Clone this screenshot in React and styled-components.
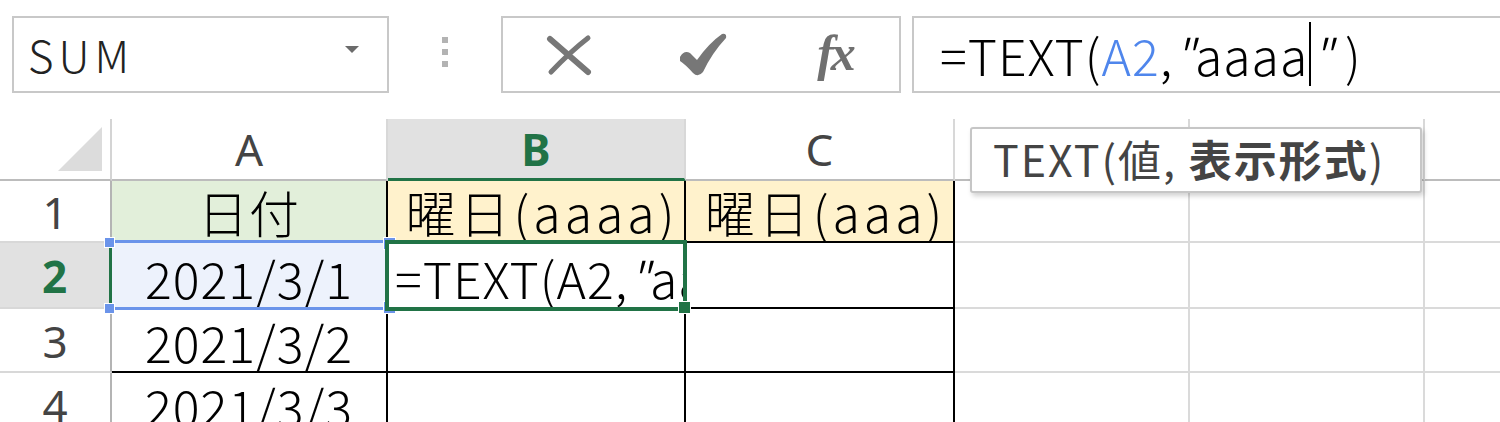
import React from 'react'
import styled, { createGlobalStyle } from 'styled-components'

const GlobalStyle = createGlobalStyle`
  html, body {
    margin: 0;
    padding: 0;
    background: #fff;
  }
  body {
    width: 1500px;
    height: 422px;
    overflow: hidden;
    font-family: "Noto Sans CJK JP", "Noto Sans", sans-serif;
  }
`

const GREEN = '#217346'
const BLUE = '#6b94ea'
const GRID = '#dadada'
const THIN = '"Noto Sans CJK JP Light", "Noto Sans CJK JP DemiLight", "Noto Sans CJK JP", "Noto Sans", sans-serif'

const Page = styled.div`
  position: relative;
  width: 1500px;
  height: 422px;
  overflow: hidden;
  background: #fff;
`

// ---- formula bar ----

const Toolbar = styled.div`
  display: flex;
  padding: 16px 0 0 12px;
  height: 77px;
`

const Box = styled.div`
  box-sizing: border-box;
  height: 77px;
  border: 2px solid #c8c8c8;
  background: #fff;
  flex-shrink: 0;
`

const NameBox = styled(Box)`
  width: 377px;
  display: flex;
  align-items: center;
  justify-content: space-between;
  padding: 0 28px 2px 14px;
  font-family: ${THIN};
  font-size: 44px;
  font-weight: 300;
  color: #222;
  letter-spacing: 5px;
`

const Caret = styled.span`
  width: 0;
  height: 0;
  border-left: 7px solid transparent;
  border-right: 7px solid transparent;
  border-top: 7px solid #6b6b6b;
  margin-bottom: 8px;
`

const Grip = styled.div`
  width: 112px;
  flex-shrink: 0;
  display: flex;
  flex-direction: column;
  align-items: center;
  justify-content: center;
  gap: 6px;
  padding-bottom: 6px;
`

const Dot = styled.span`
  width: 6px;
  height: 6px;
  background: #b3b3b3;
`

const Buttons = styled(Box)`
  width: 400px;
  display: grid;
  grid-template-columns: 132px 136px 128px;
  align-items: center;
  justify-items: center;
`

const Fx = styled.span`
  font-family: "Liberation Serif", "DejaVu Serif", serif;
  font-style: italic;
  font-weight: 700;
  font-size: 50px;
  color: #707070;
  letter-spacing: -3px;
  margin-bottom: 4px;
`

const FormulaInput = styled(Box)`
  width: 620px;
  margin-left: 11px;
  border-right: none;
  display: flex;
  align-items: center;
  padding: 0 0 2px 26px;
  font-family: ${THIN};
  font-size: 50px;
  font-weight: 300;
  color: #000;
  letter-spacing: 1px;
  white-space: nowrap;
`

const Ref = styled.span`
  color: #4f86ec;
`

const Q = styled.span`
  font-style: italic;
`

const TextCaret = styled.span`
  display: inline-block;
  width: 2px;
  height: 64px;
  background: #000;
  margin: 0 0 0 1px;
  vertical-align: middle;
`

// ---- sheet ----

const Sheet = styled.div`
  margin-top: 26px;
  display: grid;
  grid-template-columns: 112px 276px 298px 269px 235px 235px 235px;
  grid-template-rows: 62px 62px 66px 64px 64px;
`

const Corner = styled.div`
  box-sizing: border-box;
  border-right: 2px solid #d4d4d4;
  border-bottom: 2px solid #bcbcbc;
  display: flex;
  justify-content: flex-end;
  align-items: flex-end;
  padding: 0 8px 8px 0;
`

const ColHead = styled.div`
  box-sizing: border-box;
  border-right: 2px solid #d8d8d8;
  border-bottom: ${p => (p.$active ? `3px solid ${GREEN}` : '2px solid #bcbcbc')};
  background: ${p => (p.$active ? '#e1e1e1' : '#fff')};
  color: ${p => (p.$active ? GREEN : '#444')};
  font-weight: ${p => (p.$active ? 700 : 400)};
  font-family: "Noto Sans", "Liberation Sans", sans-serif;
  font-size: 44px;
  display: flex;
  align-items: center;
  justify-content: center;
`

const RowHead = styled.div`
  box-sizing: border-box;
  border-right: ${p => (p.$active ? `3px solid ${GREEN}` : '2px solid #b4b4b4')};
  border-bottom: 2px solid #d8d8d8;
  background: ${p => (p.$active ? '#e1e1e1' : '#fff')};
  color: ${p => (p.$active ? GREEN : '#444')};
  font-weight: ${p => (p.$active ? 700 : 400)};
  font-family: "Noto Sans", "Liberation Sans", sans-serif;
  font-size: 44px;
  display: flex;
  align-items: center;
  justify-content: center;
  padding-top: 2px;
`

const Cell = styled.div`
  position: relative;
  z-index: ${p => p.$z || 0};
  box-sizing: border-box;
  border-right: 2px solid ${p => (p.$boxed ? '#000' : GRID)};
  border-bottom: 2px solid ${p => (p.$boxed ? '#000' : GRID)};
  background: ${p => p.$bg || '#fff'};
  display: flex;
  align-items: flex-end;
  justify-content: ${p => (p.$left ? 'flex-start' : 'center')};
  padding: 0 0 0 ${p => (p.$left ? '7px' : p.$spaced ? '12px' : '0')};
  font-family: ${THIN};
  font-size: 50px;
  font-weight: 300;
  line-height: 60px;
  letter-spacing: ${p => (p.$spaced ? '4px' : '1px')};
  color: #000;
  white-space: nowrap;
`

const Clip = styled.span`
  display: block;
  overflow: hidden;
  width: 100%;
`

const RangeMark = styled.div`
  position: absolute;
  top: -3px;
  left: -2px;
  right: -2px;
  bottom: -3px;
  border-top: 3px solid ${BLUE};
  border-bottom: 3px solid ${BLUE};
  pointer-events: none;
`

const ActiveMark = styled.div`
  position: absolute;
  top: -3px;
  left: -3px;
  right: -3px;
  bottom: -4px;
  border: 4px solid ${GREEN};
  pointer-events: none;
`

const Handle = styled.span`
  position: absolute;
  width: ${p => (p.$big ? 11 : 9)}px;
  height: ${p => (p.$big ? 11 : 9)}px;
  background: ${p => p.$color};
  border: 1px solid #fff;
  ${p => (p.$top ? 'top: -6px;' : 'bottom: -7px;')}
  ${p => (p.$left ? 'left: -6px;' : 'right: -8px;')}
`

const Tooltip = styled.div`
  position: absolute;
  left: 970px;
  top: 127px;
  box-sizing: border-box;
  width: 452px;
  height: 66px;
  border: 2px solid #c6c6c6;
  border-radius: 3px;
  background: #fff;
  box-shadow: 2px 3px 5px rgba(0, 0, 0, 0.18);
  display: flex;
  align-items: center;
  padding: 0 0 4px 21px;
  font-family: "Noto Sans CJK JP", "Noto Sans", sans-serif;
  font-size: 43px;
  letter-spacing: 2px;
  color: #444;
  white-space: pre;
`

const Bold = styled.b`
  font-weight: 700;
`

const CrossIcon = () => (
  <svg width="46" height="42" viewBox="0 0 46 42">
    <path d="M4 5 L42 38" stroke="#777" strokeWidth="6" strokeLinecap="round" fill="none" />
    <path d="M42 4 Q24 18 5 38" stroke="#777" strokeWidth="5" strokeLinecap="round" fill="none" />
  </svg>
)

const CheckIcon = () => (
  <svg width="48" height="44" viewBox="0 0 48 44">
    <path
      d="M1 24 Q5 17 11 20 L18 27 Q30 10 43 1 Q48 0 47 5 Q33 20 24 39 Q19 45 14 40 Q7 32 1 28 Z"
      fill="#777"
    />
  </svg>
)

const DeselectTriangle = () => (
  <svg width="44" height="44" viewBox="0 0 44 44">
    <polygon points="44,0 44,44 0,44" fill="#dcdcdc" />
  </svg>
)

const cols = ['A', 'B', 'C', 'D', 'E', 'F']

const rows = [
  { n: 1, a: '日付', b: '曜日(aaaa)', c: '曜日(aaa)' },
  { n: 2, a: '2021/3/1' },
  { n: 3, a: '2021/3/2' },
  { n: 4, a: '2021/3/3' },
]

function headerBg(n, col) {
  if (n !== 1) return null
  if (col === 'A') return '#e2efda'
  if (col === 'B' || col === 'C') return '#fff2cc'
  return null
}

export default function App() {
  return (
    <Page>
      <GlobalStyle />
      <Toolbar>
        <NameBox>
          SUM
          <Caret />
        </NameBox>
        <Grip>
          <Dot />
          <Dot />
          <Dot />
        </Grip>
        <Buttons>
          <CrossIcon />
          <CheckIcon />
          <Fx>fx</Fx>
        </Buttons>
        <FormulaInput>
          =TEXT(<Ref>A2</Ref>,<Q>"</Q>aaaa<TextCaret /><Q>"</Q>&nbsp;)
        </FormulaInput>
      </Toolbar>

      <Sheet>
        <Corner>
          <DeselectTriangle />
        </Corner>
        {cols.map(c => (
          <ColHead key={c} $active={c === 'B'}>
            {c}
          </ColHead>
        ))}

        {rows.map(r => (
          <React.Fragment key={r.n}>
            <RowHead $active={r.n === 2}>{r.n}</RowHead>
            {cols.map(c => {
              const boxed = c === 'A' || c === 'B' || c === 'C'
              const key = `${c}${r.n}`
              if (key === 'A2') {
                return (
                  <Cell key={key} $boxed $bg="#edf2fc" $z={1}>
                    {r.a}
                    <RangeMark>
                      <Handle $color={BLUE} $top $left />
                      <Handle $color={BLUE} $top $big />
                      <Handle $color={BLUE} $left />
                      <Handle $color={BLUE} $big />
                    </RangeMark>
                  </Cell>
                )
              }
              if (key === 'B2') {
                return (
                  <Cell key={key} $boxed $left $z={2}>
                    <Clip>
                      =TEXT(A2,<Q>"</Q>aaaa<Q>"</Q>)
                    </Clip>
                    <ActiveMark>
                      <Handle $color={GREEN} $big />
                    </ActiveMark>
                  </Cell>
                )
              }
              const text = c === 'A' ? r.a : c === 'B' ? r.b : c === 'C' ? r.c : null
              return (
                <Cell key={key} $boxed={boxed} $spaced={r.n === 1 && c !== 'A'} $bg={headerBg(r.n, c)}>
                  {text}
                </Cell>
              )
            })}
          </React.Fragment>
        ))}
      </Sheet>

      <Tooltip>
        {'TEXT(値, '}
        <Bold>表示形式</Bold>)
      </Tooltip>
    </Page>
  )
}
